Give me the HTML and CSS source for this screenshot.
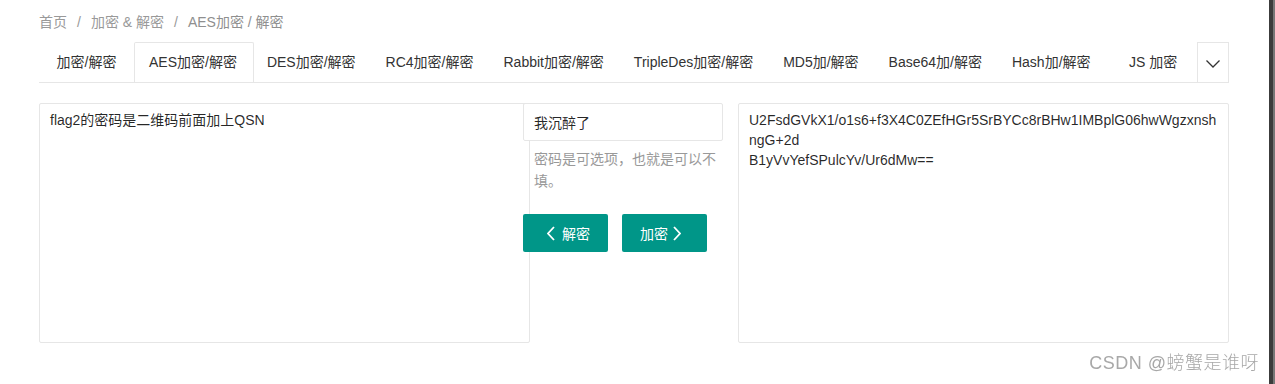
FILE: index.html
```html
<!DOCTYPE html>
<html lang="zh-CN">
<head>
  <meta charset="UTF-8">
  <meta name="viewport" content="width=device-width, initial-scale=1.0">
  <title>AES加密 / 解密</title>
  <link rel="stylesheet" href="styles.css">
</head>
<body>

<div class="page">
  <div class="breadcrumb">
    <a href="#">首页</a><span class="sep">/</span><a href="#">加密 &amp; 解密</a><span class="sep">/</span><a href="#" class="current">AES加密 / 解密</a>
  </div>

  <div class="tabs">
    <ul class="tab-title">
      <li>加密/解密</li>
      <li class="active">AES加密/解密</li>
      <li>DES加密/解密</li>
      <li>RC4加密/解密</li>
      <li>Rabbit加密/解密</li>
      <li>TripleDes加密/解密</li>
      <li>MD5加/解密</li>
      <li>Base64加/解密</li>
      <li>Hash加/解密</li>
      <li>JS 加密</li>
    </ul>
    <span class="tab-bar">
      <svg width="14" height="8" viewBox="0 0 14 8"><polyline points="0.5,0.5 7,7 13.5,0.5" fill="none" stroke="#333" stroke-width="1.3"/></svg>
    </span>
  </div>

  <div class="workspace">
    <textarea class="box" spellcheck="false">flag2的密码是二维码前面加上QSN</textarea>

    <div class="middle">
      <input type="text" class="key" value="我沉醉了">
      <div class="hint">密码是可选项，也就是可以不<br>填。</div>
      <div class="actions">
        <button class="btn btn-decrypt">
          <svg width="8" height="15" viewBox="0 0 8 15"><polyline points="7,1 1,7.5 7,14" fill="none" stroke="#fff" stroke-width="1.8"/></svg>
          解密
        </button>
        <button class="btn btn-encrypt">
          加密
          <svg width="8" height="15" viewBox="0 0 8 15"><polyline points="1,1 7,7.5 1,14" fill="none" stroke="#fff" stroke-width="1.8"/></svg>
        </button>
      </div>
    </div>

    <textarea class="box box-right" spellcheck="false" wrap="off">U2FsdGVkX1/o1s6+f3X4C0ZEfHGr5SrBYCc8rBHw1IMBplG06hwWgzxnsh
ngG+2d
B1yVvYefSPulcYv/Ur6dMw==</textarea>
  </div>
</div>

<div class="watermark">CSDN @螃蟹是谁呀</div>
<div class="edge"></div>

</body>
</html>
```

FILE: styles.css
```css
* {
  margin: 0;
  padding: 0;
  box-sizing: border-box;
  font-family: 'Liberation Sans', 'Noto Sans CJK SC', sans-serif;
}

body, html {
  height: 100%;
  width: 100%;
  overflow: hidden;
  background: #fff;
  font-size: 14px;
  color: #333;
}

.page {
  width: 1190px;
  margin-left: 39px;
  padding-top: 12px;
}

/* breadcrumb */
.breadcrumb {
  line-height: 20px;
  color: #999;
}

.breadcrumb a {
  color: #999;
  text-decoration: none;
}

.breadcrumb .current {
  color: #8f8f8f;
}

.breadcrumb .sep {
  margin: 0 10px;
}

/* tabs */
.tabs {
  position: relative;
  margin-top: 10px;
}

.tab-title {
  display: flex;
  height: 41px;
  list-style: none;
  white-space: nowrap;
  overflow: hidden;
  border-bottom: 1px solid #e6e6e6;
  padding-right: 30px;
}

.tab-title li {
  position: relative;
  min-width: 95px;
  padding: 0 15px;
  line-height: 40px;
  text-align: center;
  color: #333;
  flex-shrink: 0;
}

.tab-title li.active::after {
  content: "";
  position: absolute;
  left: 0;
  top: 0;
  width: 100%;
  height: 41px;
  border: 1px solid #e6e6e6;
  border-bottom: none;
  border-radius: 2px 2px 0 0;
}

.tab-bar {
  position: absolute;
  right: 0;
  top: 0;
  width: 32px;
  height: 41px;
  border: 1px solid #e6e6e6;
  background: #fff;
  display: flex;
  align-items: center;
  justify-content: center;
  padding-top: 2px;
}

/* main area */
.workspace {
  display: flex;
  align-items: flex-start;
  margin-top: 20px;
}

.box {
  width: 491px;
  height: 240px;
  flex-shrink: 0;
  border: 1px solid #e6e6e6;
  border-radius: 2px;
  padding: 6px 10px;
  line-height: 20px;
  font-size: 14px;
  color: rgba(0, 0, 0, 0.85);
  resize: none;
  outline: none;
  overflow: hidden;
  background: #fff;
}

.box-right {
  margin-left: 15px;
  white-space: pre;
}

.middle {
  position: relative;
  width: 200px;
  margin-left: -7px;
}

.key {
  display: block;
  width: 100%;
  height: 38px;
  border: 1px solid #e6e6e6;
  border-radius: 2px;
  padding: 0 10px;
  font-size: 14px;
  color: rgba(0, 0, 0, 0.85);
  background: #fff;
  outline: none;
}

.hint {
  padding: 7px 0 0 11px;
  line-height: 22px;
  color: #999;
  white-space: nowrap;
}

.actions {
  display: flex;
  gap: 14px;
  margin-top: 22px;
}

.btn {
  display: flex;
  align-items: center;
  width: 85px;
  height: 38px;
  border: none;
  border-radius: 2px;
  background-color: #009688;
  color: #fff;
  font-size: 14px;
  cursor: pointer;
}

.btn-decrypt {
  padding-left: 24px;
}

.btn-decrypt svg {
  margin-right: 7px;
}

.btn-encrypt {
  padding-left: 18px;
}

.btn-encrypt svg {
  margin-left: 5px;
}

/* overlays */
.watermark {
  position: fixed;
  right: 16px;
  top: 352px;
  line-height: 22px;
  font-size: 18px;
  font-weight: 300;
  letter-spacing: 0.5px;
  color: #a8a8a8;
}

.edge {
  position: fixed;
  top: 0;
  right: 0;
  width: 6px;
  height: 100%;
  background: #3c3c3c;
  border-right: 2px solid #777;
}
```
